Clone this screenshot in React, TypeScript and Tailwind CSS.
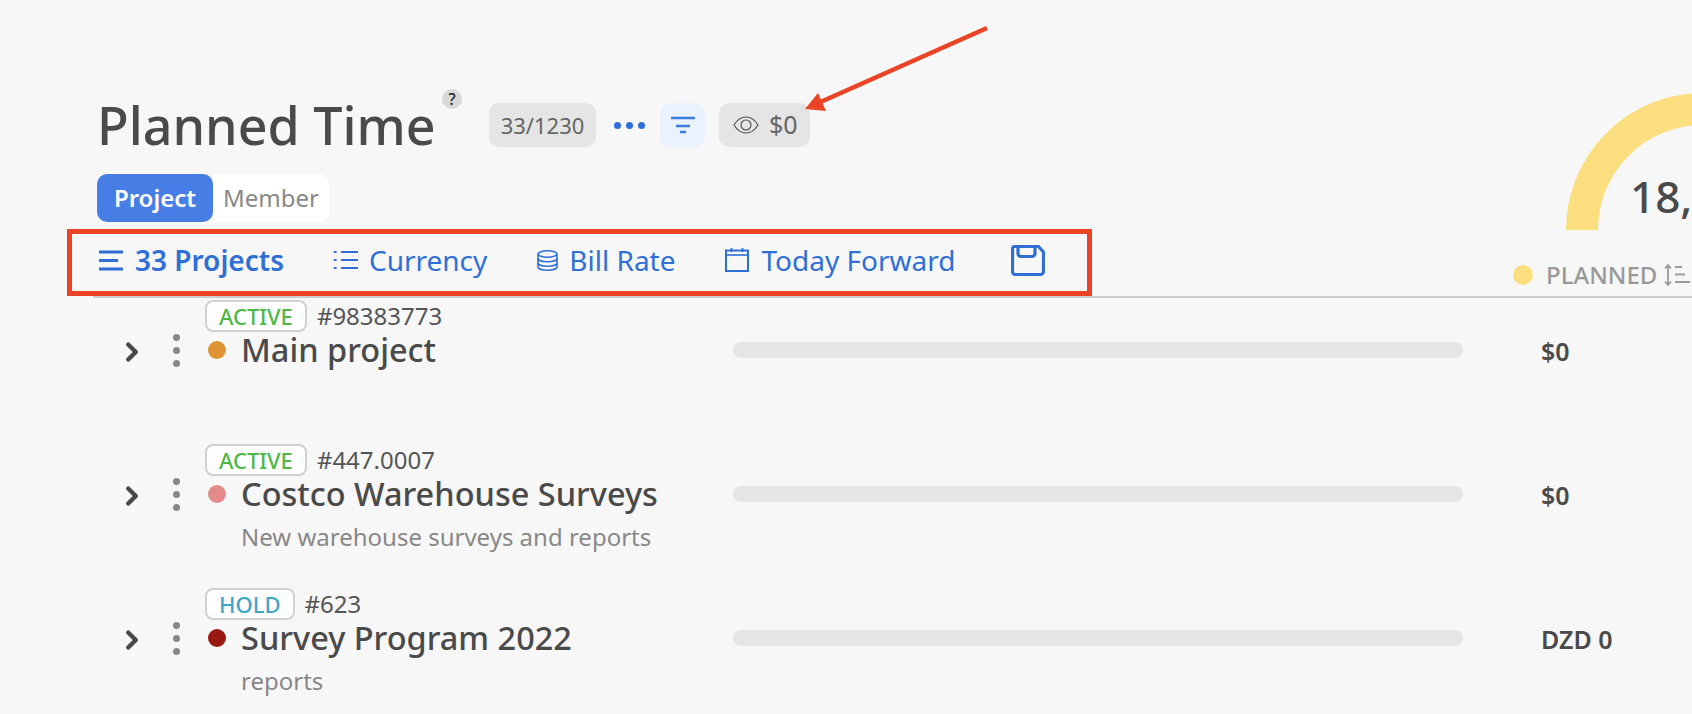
import { ChevronRight } from "lucide-react";

const rows = [
  { status: "ACTIVE", statusColor: "text-[#4db848]", code: "#98383773", dot: "bg-[#df9333]", name: "Main project", sub: "", amount: "$0" },
  { status: "ACTIVE", statusColor: "text-[#4db848]", code: "#447.0007", dot: "bg-[#e38a8a]", name: "Costco Warehouse Surveys", sub: "New warehouse surveys and reports", amount: "$0" },
  { status: "HOLD", statusColor: "text-[#3fa5c9]", code: "#623", dot: "bg-[#97190f]", name: "Survey Program 2022", sub: "reports", amount: "DZD 0" },
];

const BarsIcon = () => (
  <svg width="24" height="21" viewBox="0 0 24 21" fill="none" stroke="#2f6fd6" strokeWidth="3">
    <path d="M0 2h24M0 10.500h19M0 19h24" />
  </svg>
);

const ListIcon = () => (
  <svg width="24" height="20" viewBox="0 0 24 20" fill="none" stroke="#2f6fd6" strokeWidth="1.800">
    <path d="M7 2h17M7 10h17M7 18h17" />
    <path d="M0 2h2.500M0 10h2.500M0 18h2.500" strokeWidth="2.200" />
  </svg>
);

const DbIcon = () => (
  <svg width="21" height="21" viewBox="0 0 21 21" fill="none" stroke="#2f6fd6" strokeWidth="1.600">
    <ellipse cx="10.500" cy="4" rx="9.500" ry="3.200" />
    <path d="M1 4v13c0 1.800 4.200 3.200 9.500 3.200s9.500-1.400 9.500-3.200v-13" />
    <path d="M1 8.500c0 1.800 4.200 3.200 9.500 3.200s9.500-1.400 9.500-3.200M1 13c0 1.800 4.200 3.200 9.500 3.200s9.500-1.400 9.500-3.200" />
  </svg>
);

const CalIcon = () => (
  <svg width="24" height="24" viewBox="0 0 24 24" fill="none" stroke="#2f6fd6" strokeWidth="2">
    <rect x="1" y="2.500" width="22" height="20.500" />
    <path d="M1 7h22" strokeWidth="1.600" />
    <path d="M6.500 0v4M17.500 0v4" strokeWidth="1.800" />
  </svg>
);

const SaveIcon = () => (
  <svg width="34" height="31" viewBox="0 0 34 31" fill="none" stroke="#2f6fd6" strokeWidth="3.200">
    <path d="M4 1.500h23.500l5 5.500v19.500a3 3 0 0 1-3 3h-25.500a3 3 0 0 1-2.500-3v-22.500a3 3 0 0 1 3-3z" strokeLinejoin="round" />
    <path d="M7 1.500v7a3 3 0 0 0 3 3h11a3 3 0 0 0 3-3v-7" />
  </svg>
);

const SortIcon = () => (
  <svg width="27" height="22" viewBox="0 0 27 22" fill="none" stroke="#9a9a9a" strokeWidth="1.800">
    <path d="M4 1v20M1 4.500l3-3.500 3 3.500M1 17.500l3 3.500 3-3.500" />
    <path d="M11 3h7M11 10.500h10M11 18h15" />
  </svg>
);

const Badge = ({ children, className }: { children: React.ReactNode; className: string }) => (
  <div className={`h-[44px] rounded-[10px] flex items-center ${className}`}>{children}</div>
);

export default function App() {
  return (
    <div className="relative h-[714px] w-[1692px] overflow-hidden bg-[#f7f7f7] font-['Noto_Sans','Open_Sans',sans-serif] text-[#4a4a4a]">
      {/* annotation arrow */}
      <svg className="absolute left-0 top-0" width="1692" height="160" fill="none">
        <path d="M987 28L816 104" stroke="#ea4326" strokeWidth="4.500" />
        <path d="M805 109l13-16 8 18z" fill="#ea4326" />
      </svg>

      <div className="flex justify-between border-b-2 border-[#cbcbcb] ml-[93px]">
        {/* left part */}
        <div className="-ml-[26px]">
          <div className="flex items-start pl-[30px] pt-[103px]">
            <div className="relative h-[44px] w-[392px] text-[52px] leading-[44px] font-medium whitespace-nowrap">
              Planned Time
              <span className="absolute left-[345px] -top-[14px] flex h-[20px] w-[20px] items-center justify-center rounded-full bg-[#d9d9d9] text-[16px] leading-none font-medium text-[#222]">?</span>
            </div>
            <Badge className="w-[107px] justify-center bg-[#e5e5e5] text-[22px] text-[#666]">33/1230</Badge>
            <div className="ml-[18px] flex h-[44px] items-center gap-[5px]">
              <span className="h-[7px] w-[7px] rounded-full bg-[#2f6fd6]" />
              <span className="h-[7px] w-[7px] rounded-full bg-[#2f6fd6]" />
              <span className="h-[7px] w-[7px] rounded-full bg-[#2f6fd6]" />
            </div>
            <Badge className="ml-[15px] w-[45px] justify-center bg-[#e9f2fd]">
              <svg width="24" height="18" viewBox="0 0 24 18" fill="none" stroke="#3b7de0" strokeWidth="2.400">
                <path d="M0 2h24M5 10h14M9 16h6" />
              </svg>
            </Badge>
            <Badge className="ml-[14px] w-[91px] pl-[14px] gap-[10px] bg-[#e5e5e5] text-[25px] text-[#666]">
              <svg width="26" height="18" viewBox="0 0 26 18" fill="none" stroke="#555" strokeWidth="1.200">
                <path d="M1 9c3-5 7.500-8 12-8s9 3 12 8c-3 5-7.500 8-12 8s-9-3-12-8z" />
                <circle cx="13" cy="9" r="5" />
              </svg>
              $0
            </Badge>
          </div>

          <div className="mt-[27px] ml-[30px] flex w-fit text-[24px]">
            <div className="flex h-[48px] w-[116px] items-center justify-center rounded-[10px] bg-[#477ee6] font-semibold text-white">Project</div>
            <div className="flex h-[48px] w-[116px] items-center justify-center rounded-r-[10px] bg-white text-[#888]">Member</div>
          </div>

          <div className="mt-[7px] flex h-[67px] w-[1025px] items-center border-[5px] border-[#ea4326] pl-[27px] pb-[5px] text-[28px] text-[#2f6fd6]">
            <div className="flex items-center gap-[12px] font-semibold whitespace-nowrap"><BarsIcon />33 Projects</div>
            <div className="ml-[50px] flex items-center gap-[11px] whitespace-nowrap"><ListIcon />Currency</div>
            <div className="ml-[50px] flex items-center gap-[11px] whitespace-nowrap"><DbIcon />Bill Rate</div>
            <div className="ml-[49px] flex items-center gap-[13px] whitespace-nowrap"><CalIcon />Today Forward</div>
            <div className="ml-[55px]"><SaveIcon /></div>
          </div>
        </div>

        {/* gauge */}
        <div className="w-[179px] pt-[93px]">
          <div className="relative h-[137px] w-[179px]">
            <svg width="179" height="137" fill="none">
              <circle cx="190" cy="137" r="121" stroke="#fbdf7e" strokeWidth="32" />
            </svg>
            <div className="absolute left-[117px] top-[70px] text-[44px] font-medium whitespace-nowrap">18,</div>
          </div>
          <div className="mt-[27px] flex items-center">
            <span className="h-[20px] w-[20px] rounded-full bg-[#fbdf7e]" />
            <span className="ml-[13px] text-[24px] font-medium text-[#999]">PLANNED</span>
            <span className="ml-[7px]"><SortIcon /></span>
          </div>
        </div>
      </div>

      <div className="pl-[125px]">
        {rows.map((row) => (
          <div key={row.code} className="flex h-[144px] items-start pt-[2px]">
            <div className="flex h-[32px] mt-[36px] w-[45px] items-center -ml-[8px]">
              <ChevronRight size={30} strokeWidth={3.500} className="text-[#4a4a4a]" />
            </div>
            <div className="mt-[34px] flex w-[29px] flex-col items-center gap-[6px]">
              <span className="h-[7px] w-[7px] rounded-full bg-[#888]" />
              <span className="h-[7px] w-[7px] rounded-full bg-[#888]" />
              <span className="h-[7px] w-[7px] rounded-full bg-[#888]" />
            </div>
            <div className="ml-[14px] w-[528px]">
              <div className="flex h-[32px] items-center gap-[10px]">
                <div className={`flex h-[32px] items-center rounded-[8px] border-2 border-[#d2d2d2] bg-white px-[12px] text-[22px] leading-[28px] font-medium ${row.statusColor}`}>{row.status}</div>
                <div className="text-[24px] leading-[32px] text-[#555]">{row.code}</div>
              </div>
              <div className="flex items-center ml-[3px]">
                <span className={`h-[18px] w-[18px] rounded-full ${row.dot}`} />
                <span className="ml-[15px] text-[32.500px] font-medium leading-[36px] whitespace-nowrap">{row.name}</span>
              </div>
              <div className="ml-[36px] mt-[7px] text-[24px] leading-[36px] text-[#888] whitespace-nowrap">{row.sub}</div>
            </div>
            <div className="mt-[42px] h-[16px] w-[730px] rounded-[8px] bg-[#e5e5e5]" />
            <div className="ml-[78px] mt-[32px] text-[25px] leading-[38px] font-semibold whitespace-nowrap">{row.amount}</div>
          </div>
        ))}
      </div>
    </div>
  );
}
